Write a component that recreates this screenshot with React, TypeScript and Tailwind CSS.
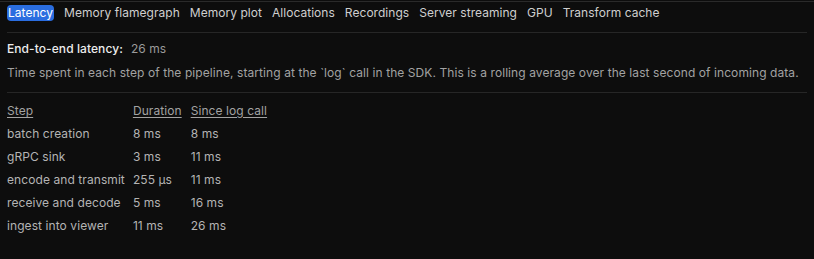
import React from 'react';

const tabs = [
  'Latency',
  'Memory flamegraph',
  'Memory plot',
  'Allocations',
  'Recordings',
  'Server streaming',
  'GPU',
  'Transform cache',
];

const rows = [
  { step: 'batch creation', duration: '8 ms', since: '8 ms' },
  { step: 'gRPC sink', duration: '3 ms', since: '11 ms' },
  { step: 'encode and transmit', duration: '255 µs', since: '11 ms' },
  { step: 'receive and decode', duration: '5 ms', since: '16 ms' },
  { step: 'ingest into viewer', duration: '11 ms', since: '26 ms' },
];

export default function App() {
  return (
    <div
      className="w-[814px] h-[259px] bg-[#0d0d0d] text-[12px] tracking-[0.08px] text-[#cacaca] pt-[1px] overflow-hidden"
      style={{ fontFamily: 'Inter, "Noto Sans", sans-serif' }}
    >
      {/* top edge line */}
      <div className="h-[1px] bg-[#2a2a2a]" />

      <div className="px-[7px]">
        {/* Tab bar */}
        <div className="flex items-start gap-[10px] h-[31px] pt-[3px] border-b border-[#262626] tracking-[0.04px]">
          {tabs.map((t, i) =>
            i === 0 ? (
              <span key={t} className="bg-[#2a6de0] text-white rounded-[4px] px-[1px] h-[16px] leading-[16px]">
                {t}
              </span>
            ) : (
              <span key={t} className="h-[16px] leading-[16px] text-[#cfcfcf]">
                {t}
              </span>
            )
          )}
        </div>

        {/* Summary */}
        <div className="border-b border-[#262626] pb-[11px]">
          <div className="mt-[8px] h-[16px] leading-[16px] flex gap-[8px]">
            <span className="text-[#ececec] font-medium">End-to-end latency:</span>
            <span className="text-[#9a9a9a]">26 ms</span>
          </div>
          <p className="mt-[8px] leading-[16px] text-[#a2a2a2] whitespace-nowrap">
            Time spent in each step of the pipeline, starting at the `log` call in the SDK. This is a rolling average over the last second of incoming data.
          </p>
        </div>

        {/* Table */}
        <table className="mt-[7px] border-collapse">
          <thead>
            <tr className="h-[22px] text-[#a2a2a2]">
              <th className="text-left font-normal p-0 pr-[8px]"><span className="underline underline-offset-2">Step</span></th>
              <th className="text-left font-normal p-0 pr-[9px]"><span className="underline underline-offset-2">Duration</span></th>
              <th className="text-left font-normal p-0"><span className="underline underline-offset-2">Since log call</span></th>
            </tr>
          </thead>
          <tbody className="text-[#b4b4b4]">
            {rows.map((r) => (
              <tr key={r.step} className="h-[23px]">
                <td className="p-0 pr-[8px]">{r.step}</td>
                <td className="p-0 pr-[9px]">{r.duration}</td>
                <td className="p-0">{r.since}</td>
              </tr>
            ))}
          </tbody>
        </table>
      </div>
    </div>
  );
}
